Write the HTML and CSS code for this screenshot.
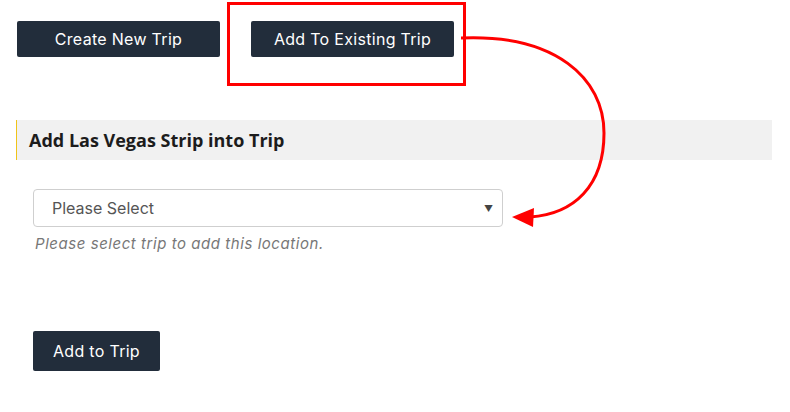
FILE: index.html
```html
<!DOCTYPE html>
<html>
<head>
<meta charset="utf-8">
<link rel="stylesheet" href="styles.css">
</head>
<body>
<div class="page">
  <div class="tabs">
    <button class="btn btn-tab">Create New Trip</button>
    <button class="btn btn-tab btn-second">Add To Existing Trip</button>
  </div>
  <div class="heading">Add Las Vegas Strip into Trip</div>
  <div class="form">
    <div class="select">
      <span class="select-text">Please Select</span>
      <span class="caret">&#9660;</span>
    </div>
    <div class="help">Please select trip to add this location.</div>
    <button class="btn btn-submit">Add to Trip</button>
  </div>
  <div class="highlight"></div>
  <svg class="arrow" width="790" height="412" viewBox="0 0 790 412">
    <path d="M461 38 C 555 34, 604 78, 604 133 C 604 186, 574 214, 530 217" fill="none" stroke="#ff0000" stroke-width="3"/>
    <polygon points="512,217 534,208 533,227" fill="#ff0000"/>
  </svg>
</div>
</body>
</html>
```
FILE: styles.css
```css
* { box-sizing: border-box; }
body {
  margin: 0;
  background: #fff;
  font-family: Inter, "Open Sans", sans-serif;
}
.page {
  position: relative;
  width: 790px;
  height: 412px;
  padding: 21px 0 0 17px;
}
.tabs {
  display: flex;
  gap: 31px;
}
.btn {
  border: none;
  background: #222d3b;
  color: #fff;
  font-family: Inter, "Open Sans", sans-serif;
  font-size: 16px;
  letter-spacing: 0.3px;
  border-radius: 2px;
  padding: 0;
  cursor: pointer;
}
.btn-tab {
  width: 203px;
  height: 36px;
}
.heading {
  margin: 63px 0 0 -1px;
  width: 756px;
  height: 40px;
  background: #f1f1f1;
  border-left: 1px solid #f0c419;
  padding-left: 12px;
  display: flex;
  align-items: center;
  font-weight: 700;
  font-size: 18px;
  color: #1c1c1c;
  font-family: "Open Sans", sans-serif;
}
.form {
  padding: 29px 0 0 16px;
}
.select {
  width: 470px;
  height: 38px;
  border: 1px solid #cfcfcf;
  border-radius: 4px;
  display: flex;
  align-items: center;
  justify-content: space-between;
  padding: 0 9px 0 18px;
  color: #555;
  font-size: 16px;
}
.caret {
  font-size: 9px;
  color: #444;
}
.help {
  margin: 7px 0 0 2px;
  font-style: italic;
  font-size: 15px;
  letter-spacing: 0.55px;
  color: #777;
}
.btn-submit {
  margin-top: 78px;
  width: 127px;
  height: 40px;
}
.highlight {
  position: absolute;
  left: 227px;
  top: 2px;
  width: 239px;
  height: 84px;
  border: 3px solid #ff0000;
}
.arrow {
  position: absolute;
  left: 0;
  top: 0;
}
```
